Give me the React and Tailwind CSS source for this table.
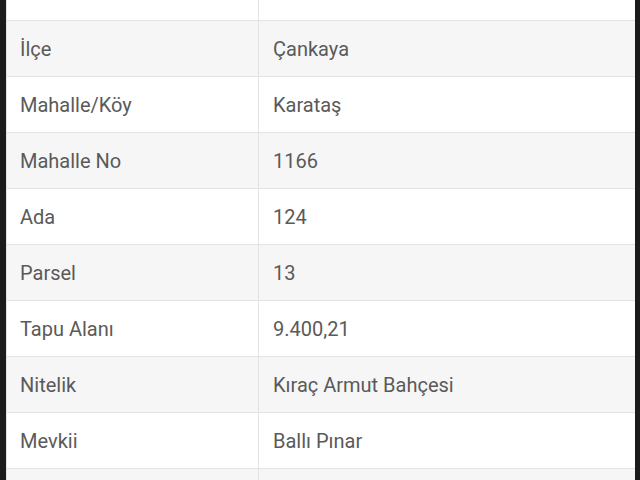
const rows = [
  ["İl", "Ankara"],
  ["İlçe", "Çankaya"],
  ["Mahalle/Köy", "Karataş"],
  ["Mahalle No", "1166"],
  ["Ada", "124"],
  ["Parsel", "13"],
  ["Tapu Alanı", "9.400,21"],
  ["Nitelik", "Kıraç Armut Bahçesi"],
  ["Mevkii", "Ballı Pınar"],
  ["Zemin Tipi", "Ana Taşınmaz"],
];

export default function App() {
  return (
    <div
      className="w-[640px] h-[480px] overflow-hidden bg-[#161616] flex"
      style={{ fontFamily: "Roboto, 'Noto Sans', sans-serif" }}
    >
      <div className="w-[6px] shrink-0 bg-[#1b1b1b]" />
      <div className="flex-1 bg-white border-l border-[#e2e2e2] overflow-hidden">
        <div className="-mt-[35px]">
          {rows.map(([label, value], i) => (
            <div
              key={label}
              className={`flex h-[56px] border-b border-[#e3e3e3] ${
                i % 2 === 1 ? "bg-[#f6f6f6]" : "bg-white"
              }`}
            >
              <div className="w-[252px] shrink-0 flex items-center pl-[13px] border-r border-[#e3e3e3] text-[20px] text-[#5a5a5a]">
                {label}
              </div>
              <div className="flex-1 flex items-center pl-[14px] text-[20px] text-[#5a5a5a]">
                {value}
              </div>
            </div>
          ))}
        </div>
      </div>
      <div className="w-[5px] shrink-0 bg-[#1b1b1b]" />
    </div>
  );
}
